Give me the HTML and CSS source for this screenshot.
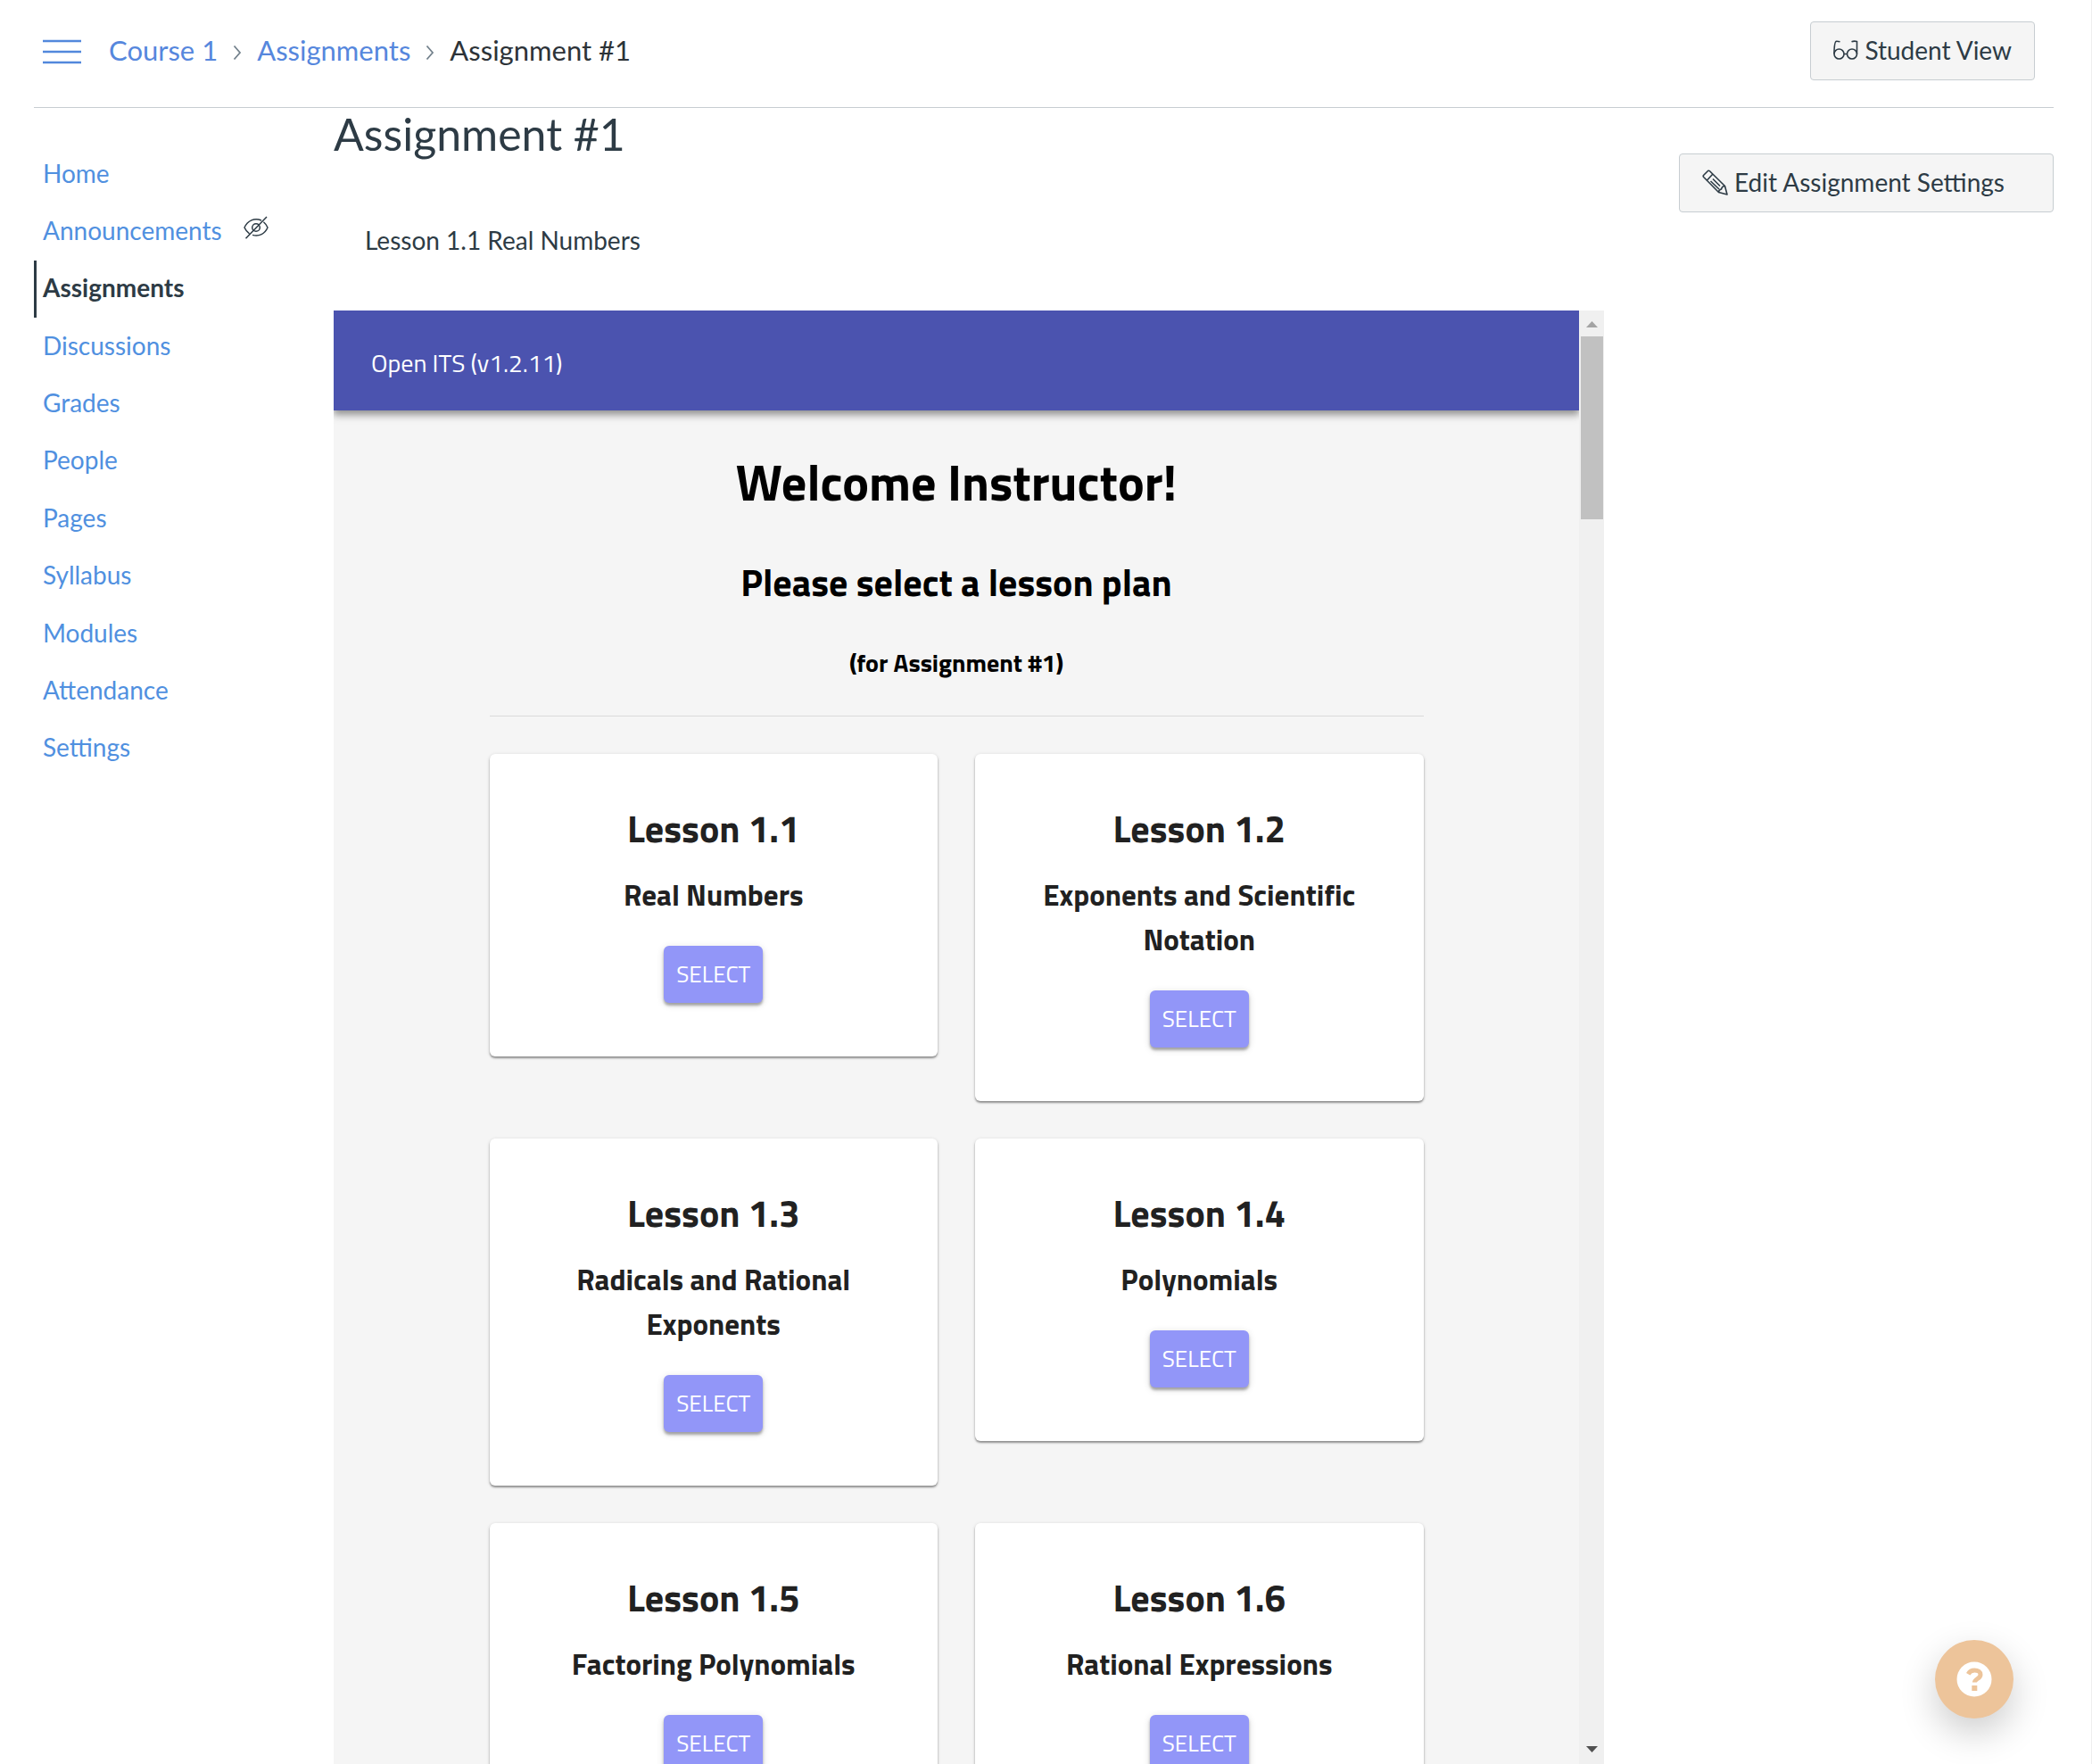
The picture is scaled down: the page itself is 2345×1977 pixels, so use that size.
FILE: index.html
```html
<!DOCTYPE html>
<html lang="en">
<head>
<meta charset="utf-8">
<title>Assignment #1</title>
<link rel="stylesheet" href="styles.css">
</head>
<body>
<div class="page">
  <header class="topbar">
    <button class="menu-toggle" type="button" aria-label="Toggle course navigation">
      <svg width="44" height="28" viewBox="0 0 44 28"><path d="M0 2h43M0 14h43M0 26h43" stroke="#5288dc" stroke-width="2.4"/></svg>
    </button>
    <nav class="crumbs" aria-label="Breadcrumb">
      <a href="#">Course 1</a>
      <svg class="chevron" width="10" height="18" viewBox="0 0 10 18"><path d="M1.500 1.500 8 9l-6.500 7.500" fill="none" stroke="#73818c" stroke-width="1.800"/></svg>
      <a href="#">Assignments</a>
      <svg class="chevron" width="10" height="18" viewBox="0 0 10 18"><path d="M1.500 1.500 8 9l-6.500 7.500" fill="none" stroke="#73818c" stroke-width="1.800"/></svg>
      <span>Assignment #1</span>
    </nav>
    <button class="btn" type="button">
      <svg width="28" height="24" viewBox="0 0 28 24" fill="none" stroke="#2d3b45" stroke-width="1.600"><circle cx="6.500" cy="16.500" r="5.500"/><circle cx="21" cy="16.500" r="5.500"/><path d="M12 16.500h3.500M1 16.500C1 9 1.500 2.500 3.500 2.300 5 2.200 6 2.400 7.500 2.800M26.500 16.500V2.600C24.500 2 22.500 2 20.500 2.800"/></svg>
      Student View
    </button>
  </header>

  <div class="layout">
    <nav class="course-nav" aria-label="Course">
      <ul>
        <li><a href="#">Home</a></li>
        <li><a href="#">Announcements</a>
          <svg class="hidden-icon" width="28" height="26" viewBox="0 0 28 26" fill="none" stroke="#2d3b45" stroke-width="1.500"><path d="M20 5C12 1.500 4.500 5.500 1 13c1.300 2.900 3.200 5.200 5.500 6.800M10 21.400C17.500 23.500 24 20 27 13c-1.100-2.500-2.700-4.600-4.600-6.200M26 1 2.500 25.200"/><circle cx="14" cy="13" r="4.300"/></svg>
        </li>
        <li class="active"><a href="#" aria-current="page">Assignments</a></li>
        <li><a href="#">Discussions</a></li>
        <li><a href="#">Grades</a></li>
        <li><a href="#">People</a></li>
        <li><a href="#">Pages</a></li>
        <li><a href="#">Syllabus</a></li>
        <li><a href="#">Modules</a></li>
        <li><a href="#">Attendance</a></li>
        <li><a href="#">Settings</a></li>
      </ul>
    </nav>

    <main class="content">
      <h1>Assignment #1</h1>
      <p class="description">Lesson 1.1 Real Numbers</p>
      <section class="tool">
        <div class="tool-view">
          <div class="tool-bar">Open ITS (v1.2.11)</div>
          <div class="tool-body">
            <h2>Welcome Instructor!</h2>
            <h3>Please select a lesson plan</h3>
            <h4>(for Assignment #1)</h4>
            <hr>
            <div class="lessons">
              <article class="card"><h2>Lesson 1.1</h2><h3>Real Numbers</h3><button type="button">SELECT</button></article>
              <article class="card"><h2>Lesson 1.2</h2><h3>Exponents and Scientific Notation</h3><button type="button">SELECT</button></article>
              <article class="card"><h2>Lesson 1.3</h2><h3>Radicals and Rational Exponents</h3><button type="button">SELECT</button></article>
              <article class="card"><h2>Lesson 1.4</h2><h3>Polynomials</h3><button type="button">SELECT</button></article>
              <article class="card"><h2>Lesson 1.5</h2><h3>Factoring Polynomials</h3><button type="button">SELECT</button></article>
              <article class="card"><h2>Lesson 1.6</h2><h3>Rational Expressions</h3><button type="button">SELECT</button></article>
            </div>
          </div>
        </div>
        <div class="scrollbar" aria-hidden="true">
          <svg width="28" height="29" viewBox="0 0 28 29"><path d="M8 19 14.500 12 21 19z" fill="#a3a3a3"/></svg>
          <div class="thumb"></div>
          <svg class="down" width="28" height="29" viewBox="0 0 28 29"><path d="M8 9h13l-6.500 7z" fill="#505050"/></svg>
        </div>
      </section>
    </main>

    <aside class="actions">
      <button class="btn" type="button">
        <svg width="29" height="29" viewBox="0 0 29 29" fill="none" stroke="#2d3b45" stroke-width="1.600" stroke-linejoin="round"><path d="M1.500 6.500 6.500 1.500Q7.500 .8 8.500 1.800L25.500 18.500 28 28 18.500 25.500 1.700 8.500Q.8 7.500 1.500 6.500zM5.500 12 11.500 5.500M18.500 25.500c0-2.500 1-3 3-3.500.5-2 1-3.500 4-3.500M9.500 13 19 22M12 10.500l8 8"/></svg>
        Edit Assignment Settings
      </button>
    </aside>
  </div>
</div>
<button class="help" type="button" aria-label="Help">
  <svg width="40" height="40" viewBox="0 0 40 40"><circle cx="20" cy="20" r="19.500" fill="#fff"/><path d="M13.200 14.200C15 11 17.500 10 20.300 10c4 0 6.700 2 6.700 4.900 0 4.500-6.600 4.600-6.600 8.600" fill="none" stroke="#edc49a" stroke-width="5"/><path d="M17.300 27h6v6h-6z" fill="#edc49a"/></svg>
</button>
</body>
</html>
```

FILE: styles.css
```css
* { box-sizing: border-box; }

body {
  margin: 0;
  background: #fff;
  color: #2d3b45;
  font-family: Lato, "Liberation Sans", sans-serif;
  font-size: 28px;
  line-height: 42px;
}

h1, h2, h3, h4, p, ul { margin: 0; padding: 0; }
a { color: #5090e0; text-decoration: none; }
button { font: inherit; cursor: pointer; }
svg { flex: none; display: block; }

.page {
  display: flex;
  flex-direction: column;
  height: 100vh;
  padding: 0 42px 0 38px;
  border-right: 1px solid #eee;
}

.topbar {
  display: flex;
  align-items: center;
  flex: none;
  height: 121px;
  padding: 0 21px 6px 10px;
  border-bottom: 1px solid #c7cdd1;
}
.menu-toggle {
  padding: 2px 0 0;
  margin-right: 30px;
  border: 0;
  background: none;
}
.crumbs {
  display: flex;
  align-items: center;
  gap: 17px;
  margin-right: auto;
  padding-bottom: 3px;
  font-size: 31px;
  color: #2d3338;
}
.crumbs a { color: #5687dd; }
.chevron { margin-top: 6px; }

.btn {
  display: flex;
  align-items: center;
  gap: 7px;
  height: 66px;
  padding: 0 25px 2px;
  border: 1px solid #c7cdd1;
  border-radius: 4px;
  background: #f5f5f5;
  color: #2d3b45;
}

.layout {
  display: flex;
  flex: 1;
  min-height: 0;
}

.course-nav { flex: none; width: 336px; padding-top: 42px; }
.course-nav ul {
  display: grid;
  grid-auto-rows: 1fr;
  height: 708px;
  list-style: none;
}
.course-nav li {
  display: flex;
  align-items: center;
  gap: 24px;
  padding: 0 0 3px 7px;
  border-left: 3px solid transparent;
}
.course-nav .active { border-color: #2d3b45; }
.active a { color: #2d3b45; font-weight: bold; }
.hidden-icon { margin-bottom: 6px; }

.content {
  display: flex;
  flex: 1;
  flex-direction: column;
  min-width: 0;
}
.content h1 {
  font-size: 50px;
  font-weight: normal;
  line-height: 58px;
}
.description { padding: 69px 35px 58px; }

.tool { display: flex; flex: 1; min-height: 0; }
.tool-view {
  flex: 1;
  overflow: hidden;
  background: #f5f5f5;
  color: #000;
  font-family: "Titillium Web", Roboto, sans-serif;
  text-align: center;
}
.tool-bar {
  display: flex;
  align-items: center;
  height: 112px;
  padding: 6px 42px 0;
  background: #4b53af;
  box-shadow: 0 4px 7px rgba(0, 0, 0, .3), 0 7px 9px rgba(0, 0, 0, .14);
  color: #fff;
}
.tool-body { width: 75%; margin: 0 auto; padding-top: 39px; }
.tool-body > h2 { font-size: 56px; line-height: 84px; }
.tool-body > h3 { margin-top: 37px; font-size: 42px; line-height: 64px; }
.tool-body > h4 { margin-top: 38px; font-size: 28px; }
hr {
  height: 1px;
  margin: 38px 0 42px;
  border: 0;
  background: #dadada;
}

.lessons {
  display: grid;
  grid-template-columns: 1fr 1fr;
  align-items: start;
  gap: 42px;
}
.card {
  padding: 51px 56px 60px;
  border-radius: 6px;
  background: #fff;
  box-shadow: 0 2px 2px rgba(0, 0, 0, .35), 0 1px 4px rgba(0, 0, 0, .14);
  color: #212121;
}
.card h2 { font-size: 42px; line-height: 64px; }
.card h3 { margin: 18px 0 32px; font-size: 33px; line-height: 50px; }
.card button {
  display: block;
  height: 64px;
  margin: 0 auto;
  padding: 0 14px 1px;
  border: 0;
  border-radius: 6px;
  background: #9296f8;
  box-shadow: 0 3px 3px rgba(0, 0, 0, .3), 0 2px 8px rgba(0, 0, 0, .14);
  color: #fff;
  font-size: 26px;
}

.scrollbar {
  display: flex;
  flex: none;
  flex-direction: column;
  width: 28px;
  background: #f0f0f0;
}
.thumb { height: 205px; margin: 0 1px 0 2px; background: #c1c1c1; }
.down { margin-top: auto; }

.actions { flex: none; width: 504px; padding: 51px 0 0 84px; }
.actions .btn { width: 100%; }

.help {
  position: fixed;
  right: 88px;
  bottom: 51px;
  display: flex;
  align-items: center;
  justify-content: center;
  width: 88px;
  height: 88px;
  padding: 0;
  border: 0;
  border-radius: 50%;
  background: #edc49a;
  box-shadow: 0 16px 42px rgba(0, 0, 0, .2);
}
```
